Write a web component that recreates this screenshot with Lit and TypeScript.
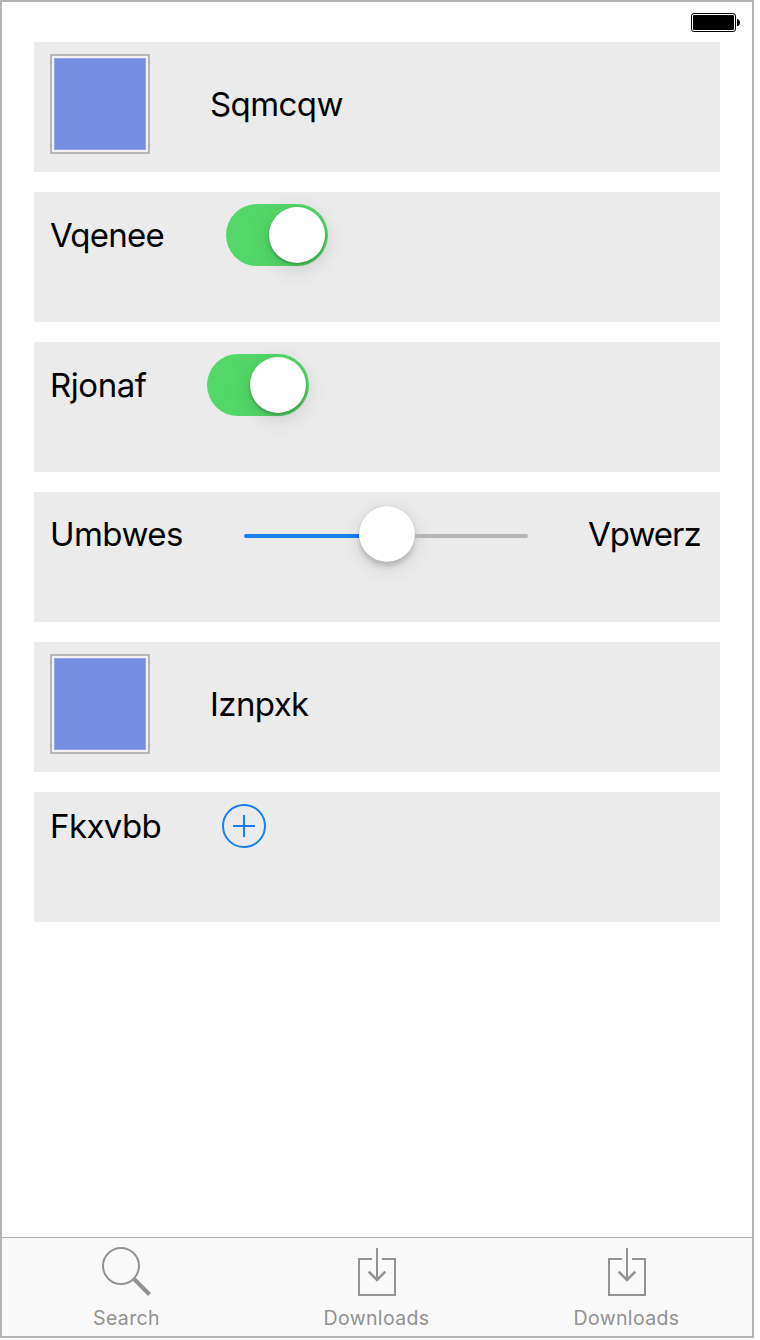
import { LitElement, html, css, svg } from "lit";
import { customElement, property } from "lit/decorators.js";
import { styleMap } from "lit/directives/style-map.js";

@customElement("ui-label")
class UiLabel extends LitElement {
  @property() text = "";
  @property({ type: Number }) width = 0;
  @property({ type: Number }) tracking = 0;

  static styles = css`
    :host { display: block; flex: none; }
    .label {
      font: 400 33px/40px Inter, "Liberation Sans", sans-serif;
      color: #000;
      white-space: nowrap;
    }
  `;

  render() {
    return html`<div class="label" style=${styleMap({
      width: `${this.width}px`,
      letterSpacing: `${this.tracking}px`,
    })}>${this.text}</div>`;
  }
}

@customElement("ui-swatch")
class UiSwatch extends LitElement {
  static styles = css`
    :host { display: block; flex: none; }
    .frame {
      box-sizing: border-box;
      width: 100px;
      height: 100px;
      padding: 2px;
      border: 2px solid #b6b6b6;
      background: #f1f2f6;
    }
    .fill {
      box-sizing: border-box;
      height: 100%;
      border: 1px solid #93a6e8;
      background: #778fe2;
    }
  `;
  render() {
    return html`<div class="frame"><div class="fill"></div></div>`;
  }
}

@customElement("ui-switch")
class UiSwitch extends LitElement {
  static styles = css`
    :host { display: block; flex: none; }
    .track {
      box-sizing: border-box;
      display: flex;
      justify-content: flex-end;
      width: 102px;
      height: 62px;
      padding: 3px;
      border-radius: 31px;
      background: #53d769;
    }
    .thumb {
      width: 56px;
      height: 56px;
      border-radius: 50%;
      background: #fff;
      box-shadow: 0 5px 22px rgba(0, 0, 0, 0.15), 0 2px 3px rgba(0, 0, 0, 0.24);
    }
  `;
  render() {
    return html`<div class="track"><div class="thumb"></div></div>`;
  }
}

@customElement("ui-slider")
class UiSlider extends LitElement {
  @property({ type: Number }) value = 0.5;
  static styles = css`
    :host { display: block; flex: none; }
    .slider {
      display: flex;
      align-items: center;
      width: 284px;
      height: 60px;
    }
    .bar { height: 4px; margin-top: 4px; }
    .done { background: #157efb; border-radius: 2px 0 0 2px; }
    .rest { flex: 1; background: #b5b5b5; border-radius: 0 2px 2px 0; }
    .thumb {
      flex: none;
      width: 56px;
      height: 56px;
      border-radius: 50%;
      background: #fff;
      box-shadow: 0 0 1px rgba(0, 0, 0, 0.3), 0 5px 22px rgba(0, 0, 0, 0.12), 0 5px 4px rgba(0, 0, 0, 0.14);
    }
  `;
  render() {
    const done = (284 - 56) * this.value + 1;
    return html`<div class="slider">
      <div class="bar done" style=${styleMap({ width: `${done}px` })}></div>
      <div class="thumb"></div>
      <div class="bar rest"></div>
    </div>`;
  }
}

const plusIcon = html`<svg width="44" height="44" viewBox="0 0 44 44" fill="none" stroke="#157efb" stroke-width="2">
  <circle cx="22" cy="22" r="21" />
  <path d="M11 22H33M22 11V33" />
</svg>`;

const searchShape = svg`
  <circle cx="21" cy="19" r="18" stroke-width="2" />
  <path d="M34 32L49.5 47.5" stroke-width="4" />`;
const downloadShape = svg`
  <path d="M22 12H9V48H45V12H32" stroke-width="2" />
  <path d="M27 1V33" stroke-width="2" />
  <path d="M18.7 24.7L27 33L35.3 24.7" stroke-width="2.6" />`;

const tabs = [
  { name: "Search", shape: searchShape },
  { name: "Downloads", shape: downloadShape },
  { name: "Downloads", shape: downloadShape },
];

@customElement("app-root")
class AppRoot extends LitElement {
  static styles = css`
    :host {
      display: block;
      font-family: Inter, "Liberation Sans", sans-serif;
      background: #fff;
    }
    svg { display: block; flex: none; }
    .phone {
      box-sizing: border-box;
      display: flex;
      flex-direction: column;
      width: 754px;
      height: 1338px;
      border: 2px solid #b3b3b3;
      background: #fff;
    }
    .status {
      box-sizing: border-box;
      display: flex;
      justify-content: flex-end;
      height: 40px;
      padding: 11px 12px 0 0;
    }
    .rows {
      flex: 1;
      display: flex;
      flex-direction: column;
      gap: 20px;
      padding: 0 32px;
    }
    .row {
      box-sizing: border-box;
      display: flex;
      align-items: flex-start;
      height: 130px;
      padding: 12px 16px;
      background: #ebebeb;
    }
    .line { display: flex; align-items: center; gap: 60px; }
    .tabs {
      box-sizing: border-box;
      display: grid;
      grid-template-columns: repeat(3, 1fr);
      height: 99px;
      border-top: 1px solid #b2b2b2;
      background: #f9f9f9;
    }
    .tab {
      display: flex;
      flex-direction: column;
      align-items: center;
      padding-top: 9px;
    }
    .name {
      margin-top: 9px;
      padding-right: 1px;
      font-size: 19.5px;
      line-height: 24px;
      letter-spacing: 0.36px;
      color: #929292;
    }
  `;

  render() {
    return html`<div class="phone">
      <div class="status">
        <svg width="49" height="19" viewBox="0 0 49 19">
          <rect x="0.5" y="0.5" width="44" height="18" rx="2.5" fill="#fff" stroke="#000" />
          <rect x="2" y="2" width="41" height="15" rx="1" />
          <path d="M46 6H47Q49 7 49 9.5T47 13H46Z" />
        </svg>
      </div>
      <div class="rows">
        <div class="row"><div class="line">
          <ui-swatch></ui-swatch>
          <ui-label text="Sqmcqw" width="134" tracking="-0.58"></ui-label>
        </div></div>
        <div class="row"><div class="line">
          <ui-label text="Vqenee" width="116" tracking="-0.75"></ui-label>
          <ui-switch></ui-switch>
        </div></div>
        <div class="row"><div class="line">
          <ui-label text="Rjonaf" width="97" tracking="-0.45"></ui-label>
          <ui-switch></ui-switch>
        </div></div>
        <div class="row"><div class="line">
          <ui-label text="Umbwes" width="134" tracking="-0.55"></ui-label>
          <ui-slider value="0.5"></ui-slider>
          <ui-label text="Vpwerz" width="116" tracking="-1"></ui-label>
        </div></div>
        <div class="row"><div class="line">
          <ui-swatch></ui-swatch>
          <ui-label text="Iznpxk" width="100" tracking="-0.6"></ui-label>
        </div></div>
        <div class="row"><div class="line">
          <ui-label text="Fkxvbb" width="112" tracking="-0.6"></ui-label>
          ${plusIcon}
        </div></div>
      </div>
      <div class="tabs">
        ${tabs.map((tab) => html`<div class="tab">
          <svg width="54" height="50" viewBox="0 0 54 50" fill="none" stroke="#929292">${tab.shape}</svg>
          <div class="name">${tab.name}</div>
        </div>`)}
      </div>
    </div>`;
  }
}
